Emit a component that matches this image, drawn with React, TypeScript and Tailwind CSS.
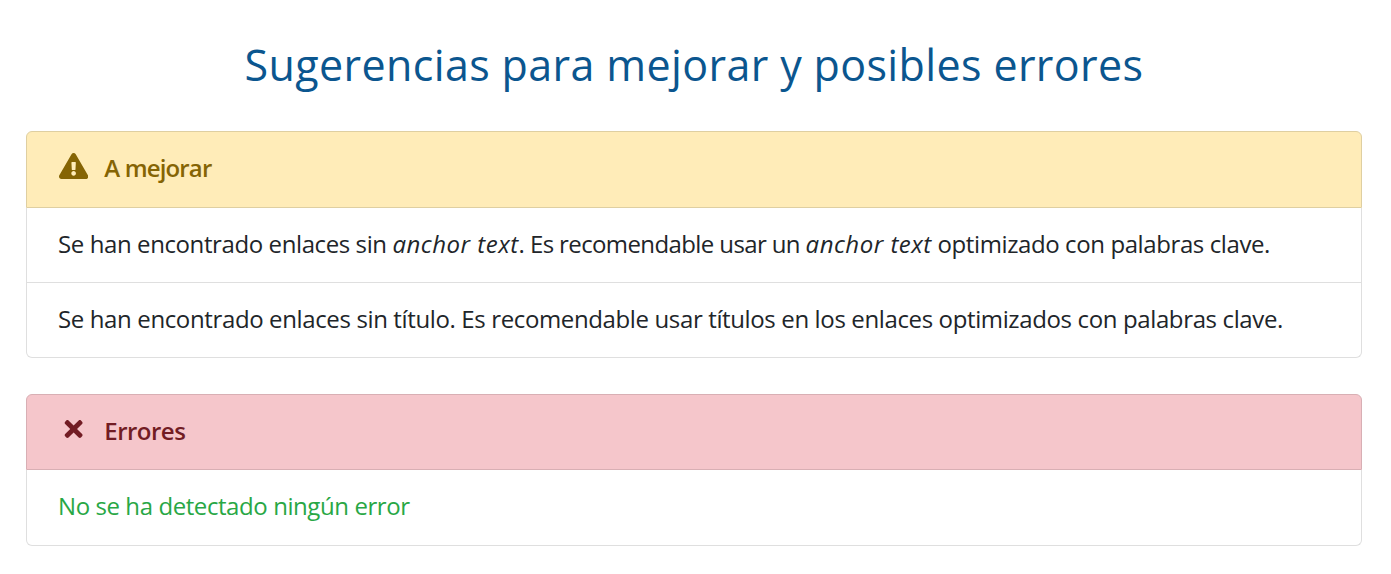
import { FaExclamationTriangle, FaTimes } from "react-icons/fa"

export default function App() {
  return (
    <main className="h-[574px] w-[1391px] overflow-hidden bg-white pr-[29px] pl-[26px] font-['Open_Sans',sans-serif] text-[#212529]">
      <h1 className="flex h-[131px] items-center justify-center pb-px text-[43px] tracking-[0.37px] whitespace-nowrap text-[#0b568f]">
        <span>Sugerencias para mejorar y posibles errores</span>
      </h1>

      <section className="text-[24px]">
        <h2 className="flex h-[77px] items-center rounded-t-md border border-[#dfcfa1] bg-[#ffecb8] pl-8 font-semibold tracking-[-0.85px] text-[#856404]">
          <FaExclamationTriangle className="mb-[7px] h-[26px] w-[29.25px]" />
          <span className="ml-4 pb-[3px]">A mejorar</span>
        </h2>
        <p className="flex h-[75px] items-center border-x border-b border-[#dfdfdf] pb-[2px] pl-[31px] whitespace-pre">
          <span className="tracking-[-0.4px]">Se han encontrado enlaces sin </span>
          <em className="tracking-[0.5px]">anchor text</em>
          <span className="tracking-[-0.61px]">. Es recomendable usar un </span>
          <em className="tracking-[0.5px]">anchor text</em>
          <span className="tracking-[-0.4px]"> optimizado con palabras clave.</span>
        </p>
        <p className="flex h-[75px] items-center rounded-b-md border-x border-b border-[#dfdfdf] pb-[3px] pl-[31px] tracking-[-0.37px] whitespace-nowrap">
          Se han encontrado enlaces sin título. Es recomendable usar títulos en los enlaces optimizados con palabras clave.
        </p>
      </section>

      <section className="mt-[36px] text-[24px]">
        <h2 className="flex h-[76px] items-center rounded-t-md border border-[#d8afb4] bg-[#f5c6cb] pl-8 font-semibold tracking-[-0.5px] text-[#721c24]">
          <FaTimes className="mb-[6px] h-[26px] w-[29.25px]" />
          <span className="ml-4 pb-[2px]">Errores</span>
        </h2>
        <p className="flex h-[76px] items-center rounded-b-md border-x border-b border-[#dfdfdf] pb-[3px] pl-[31px] tracking-[-0.42px] whitespace-nowrap text-[#28a745]">
          No se ha detectado ningún error
        </p>
      </section>
    </main>
  )
}
